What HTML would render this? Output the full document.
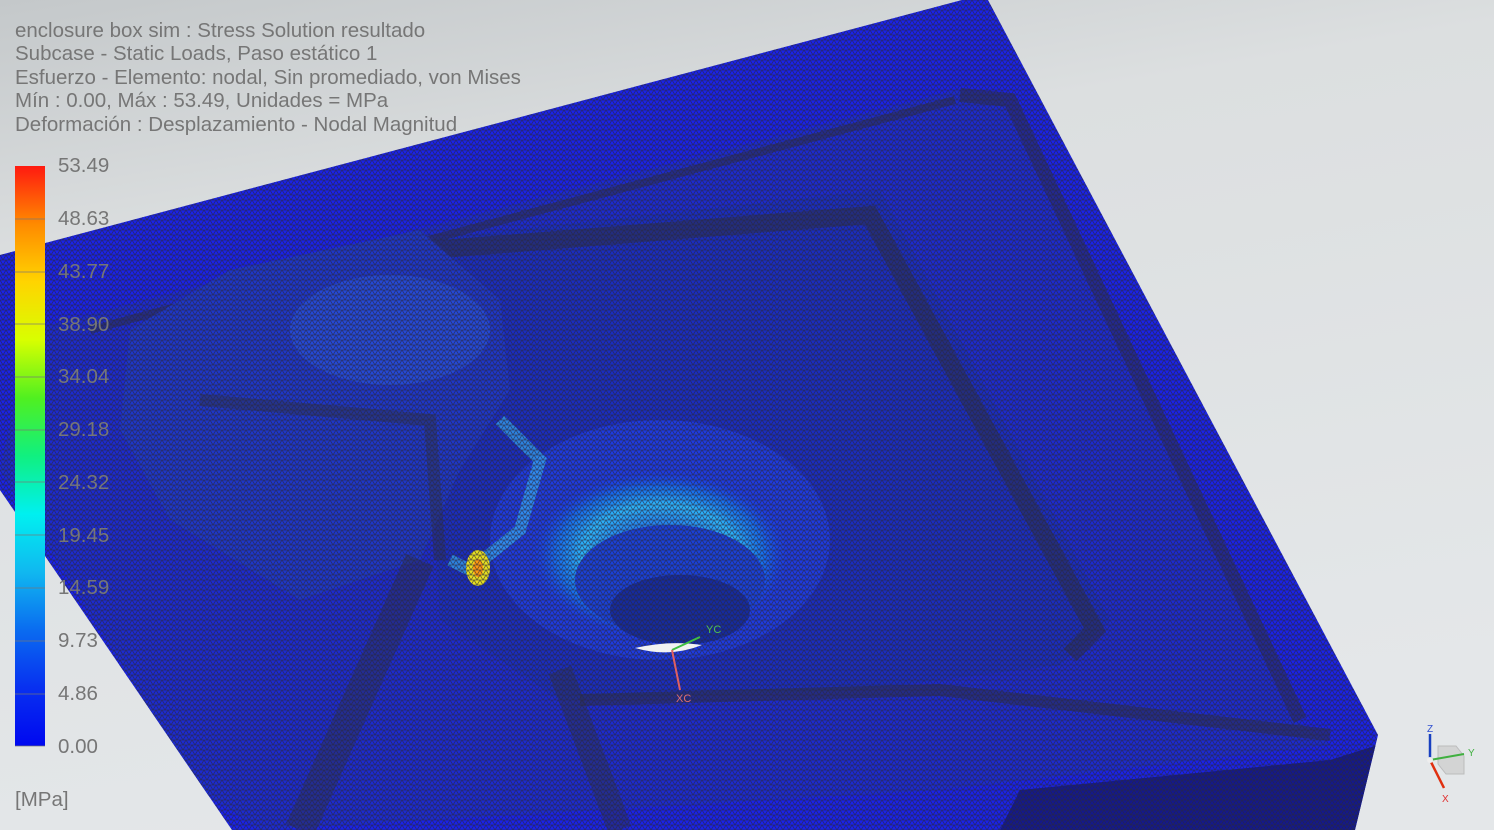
<!DOCTYPE html>
<html><head><meta charset="utf-8"><style>
html,body{margin:0;padding:0;width:1494px;height:830px;overflow:hidden;background:#e2e6e8}
.t{position:absolute;font-family:"Liberation Sans",sans-serif;color:#767676;font-size:20.5px;white-space:nowrap}
</style></head><body>
<svg width="1494" height="830" style="position:absolute;left:0;top:0">
<defs>
<linearGradient id="bg" x1="0" y1="0" x2="0.3" y2="1">
<stop offset="0" stop-color="#c4c8ca"/><stop offset="0.3" stop-color="#dcdfe0"/><stop offset="1" stop-color="#e4e7e9"/></linearGradient>
<pattern id="mesh" width="6" height="5" patternUnits="userSpaceOnUse">
<path d="M0 0H6M0 0L3 5M6 0L3 5M0 5H6" stroke="#2a2a3a" stroke-width="0.8" fill="none" opacity="0.7"/></pattern>
<linearGradient id="leg" x1="0" y1="0" x2="0" y2="1">
<stop offset="0" stop-color="#ff1a10"/><stop offset="0.1" stop-color="#ff8a00"/><stop offset="0.2" stop-color="#ffd400"/><stop offset="0.3" stop-color="#d8ff00"/><stop offset="0.4" stop-color="#50f020"/><stop offset="0.5" stop-color="#10f080"/><stop offset="0.6" stop-color="#00f0f0"/><stop offset="0.7" stop-color="#10b8f0"/><stop offset="0.8" stop-color="#0a6cf0"/><stop offset="0.9" stop-color="#0830f0"/><stop offset="1" stop-color="#0008f0"/></linearGradient>
<radialGradient id="hot" cx="0.5" cy="0.5" r="0.5"><stop offset="0" stop-color="#20c8ff" stop-opacity="0"/><stop offset="0.6" stop-color="#30d0ff" stop-opacity="0.8"/><stop offset="0.8" stop-color="#10a0ff" stop-opacity="0.5"/><stop offset="1" stop-color="#1040ff" stop-opacity="0"/></radialGradient>
<clipPath id="box"><polygon points="0,255 962,0 988,0 1378,735 1355,830 232,830 0,490"/></clipPath>
</defs>
<rect width="1494" height="830" fill="url(#bg)"/>
<g clip-path="url(#box)">
<rect width="1494" height="830" fill="#1a22e8"/>
<polygon points="1378,745 1355,830 1000,830 1020,790 1330,760" fill="#14188a"/>
<polygon points="30,330 955,90 1000,95 1290,715 1330,745 940,790 260,830 200,790 0,470" fill="#1c2ad0"/>
<polygon points="420,240 880,190 1110,620 1060,665 860,690 560,700 440,620" fill="#1a2cc0"/>
<g opacity="0.6">
<path d="M430,250 L870,215 L1095,630 L1070,655" stroke="#2a2d55" stroke-width="18" fill="none"/>
<path d="M960,95 L1010,100 L1300,720" stroke="#2a2d55" stroke-width="14" fill="none"/>
<path d="M90,330 L955,100" stroke="#2a2d55" stroke-width="8" fill="none"/>
<path d="M580,700 L940,690 L1330,735" stroke="#2a2d55" stroke-width="12" fill="none"/>
</g>
<polygon points="130,330 230,270 420,230 500,300 510,390 460,470 420,560 300,600 170,520 120,430" fill="#1e36c8"/>
<ellipse cx="390" cy="330" rx="100" ry="55" fill="#2a55e0" opacity="0.6"/>
<g opacity="0.5">
<path d="M200,400 L430,420 L440,560" stroke="#2a2d55" stroke-width="12" fill="none"/>
<path d="M420,560 L300,830" stroke="#2a2d55" stroke-width="30" fill="none"/>
<path d="M560,670 L620,830" stroke="#2a2d55" stroke-width="24" fill="none"/>
</g>
<ellipse cx="660" cy="540" rx="170" ry="120" fill="#1e3ae0"/>
<ellipse cx="660" cy="555" rx="130" ry="85" fill="url(#hot)"/>
<ellipse cx="670" cy="580" rx="95" ry="55" fill="#1a40d8"/>
<ellipse cx="680" cy="610" rx="70" ry="35" fill="#152aa0"/>
<path d="M500,420 L540,460 L520,530 L470,570 L450,560" stroke="#40d8ff" stroke-width="12" fill="none" opacity="0.5"/>
<ellipse cx="478" cy="568" rx="12" ry="18" fill="#e8e020"/>
<ellipse cx="478" cy="568" rx="5" ry="9" fill="#ff9a10"/>
<rect width="1494" height="830" fill="url(#mesh)"/>
</g>
<path d="M635,648 Q670,640 702,645 Q670,658 635,648Z" fill="#f2f2f2"/>
<path d="M672,650 L700,637" stroke="#40c040" stroke-width="2"/>
<path d="M672,650 L680,690" stroke="#e06060" stroke-width="2"/>
<text x="706" y="633" font-family="Liberation Sans" font-size="11" fill="#50c050">YC</text>
<text x="676" y="702" font-family="Liberation Sans" font-size="11" fill="#e07070">XC</text>
<rect x="15" y="166" width="30" height="580" fill="url(#leg)"/>
<g stroke="#777" stroke-width="1" opacity="0.7">
<line x1="15" y1="219" x2="45" y2="219"/><line x1="15" y1="272" x2="45" y2="272"/><line x1="15" y1="324" x2="45" y2="324"/><line x1="15" y1="377" x2="45" y2="377"/><line x1="15" y1="430" x2="45" y2="430"/><line x1="15" y1="482" x2="45" y2="482"/><line x1="15" y1="535" x2="45" y2="535"/><line x1="15" y1="588" x2="45" y2="588"/><line x1="15" y1="641" x2="45" y2="641"/><line x1="15" y1="694" x2="45" y2="694"/><line x1="15" y1="746" x2="45" y2="746"/></g>
<g transform="translate(1430,760)">
<path d="M8,-14 L26,-14 L34,-4 L34,14 L16,14 L8,4Z" fill="#ccc" stroke="#aaa" opacity="0.7"/>
<line x1="0" y1="0" x2="0" y2="-26" stroke="#1840c0" stroke-width="2.5"/>
<line x1="0" y1="0" x2="34" y2="-6" stroke="#40b040" stroke-width="2"/>
<line x1="0" y1="0" x2="14" y2="28" stroke="#e03010" stroke-width="2.5"/>
<circle cx="0" cy="0" r="3" fill="#eee"/>
<text x="-3" y="-28" font-family="Liberation Sans" font-size="10" fill="#3050d0">Z</text>
<text x="38" y="-4" font-family="Liberation Sans" font-size="10" fill="#40b040">Y</text>
<text x="12" y="42" font-family="Liberation Sans" font-size="10" fill="#e03030">X</text>
</g>
</svg>
<div class="t" style="left:15px;top:19px">enclosure box sim : Stress Solution resultado</div>
<div class="t" style="left:15px;top:42px">Subcase - Static Loads, Paso estático 1</div>
<div class="t" style="left:15px;top:66px">Esfuerzo - Elemento: nodal, Sin promediado, von Mises</div>
<div class="t" style="left:15px;top:89px">Mín : 0.00, Máx : 53.49, Unidades = MPa</div>
<div class="t" style="left:15px;top:113px">Deformación : Desplazamiento - Nodal Magnitud</div>
<div class="t" style="left:58px;top:154px">53.49</div>
<div class="t" style="left:58px;top:207px">48.63</div>
<div class="t" style="left:58px;top:260px">43.77</div>
<div class="t" style="left:58px;top:313px">38.90</div>
<div class="t" style="left:58px;top:365px">34.04</div>
<div class="t" style="left:58px;top:418px">29.18</div>
<div class="t" style="left:58px;top:471px">24.32</div>
<div class="t" style="left:58px;top:524px">19.45</div>
<div class="t" style="left:58px;top:576px">14.59</div>
<div class="t" style="left:58px;top:629px">9.73</div>
<div class="t" style="left:58px;top:682px">4.86</div>
<div class="t" style="left:58px;top:735px">0.00</div>
<div class="t" style="left:15px;top:788px">[MPa]</div>
</body></html>
